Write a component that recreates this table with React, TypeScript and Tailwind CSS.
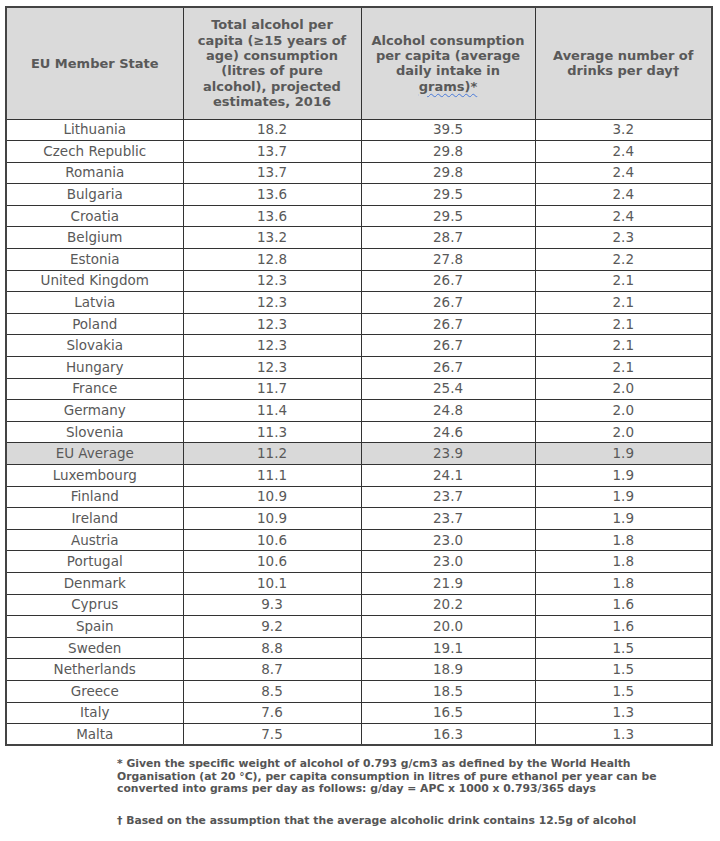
import React from 'react';

type Row = [string, string, string, string];

const rows: Row[] = [
  ['Lithuania', '18.2', '39.5', '3.2'],
  ['Czech Republic', '13.7', '29.8', '2.4'],
  ['Romania', '13.7', '29.8', '2.4'],
  ['Bulgaria', '13.6', '29.5', '2.4'],
  ['Croatia', '13.6', '29.5', '2.4'],
  ['Belgium', '13.2', '28.7', '2.3'],
  ['Estonia', '12.8', '27.8', '2.2'],
  ['United Kingdom', '12.3', '26.7', '2.1'],
  ['Latvia', '12.3', '26.7', '2.1'],
  ['Poland', '12.3', '26.7', '2.1'],
  ['Slovakia', '12.3', '26.7', '2.1'],
  ['Hungary', '12.3', '26.7', '2.1'],
  ['France', '11.7', '25.4', '2.0'],
  ['Germany', '11.4', '24.8', '2.0'],
  ['Slovenia', '11.3', '24.6', '2.0'],
  ['EU Average', '11.2', '23.9', '1.9'],
  ['Luxembourg', '11.1', '24.1', '1.9'],
  ['Finland', '10.9', '23.7', '1.9'],
  ['Ireland', '10.9', '23.7', '1.9'],
  ['Austria', '10.6', '23.0', '1.8'],
  ['Portugal', '10.6', '23.0', '1.8'],
  ['Denmark', '10.1', '21.9', '1.8'],
  ['Cyprus', '9.3', '20.2', '1.6'],
  ['Spain', '9.2', '20.0', '1.6'],
  ['Sweden', '8.8', '19.1', '1.5'],
  ['Netherlands', '8.7', '18.9', '1.5'],
  ['Greece', '8.5', '18.5', '1.5'],
  ['Italy', '7.6', '16.5', '1.3'],
  ['Malta', '7.5', '16.3', '1.3'],
];

const th = 'border border-[#333] bg-[#dadada] px-1 text-center align-middle font-bold text-[13px] leading-[15.3px]';
const td = 'border border-[#333] h-[21.6px] p-0 text-center align-middle text-[13.5px] leading-[15px]';

export default function App() {
  return (
    <div className="min-h-[841px] w-[720px] bg-white pl-[5px] pt-[6px] text-[#595959] [font-family:'DejaVu_Sans',sans-serif]">
      <table className="w-[706px] table-fixed border-collapse border-2 border-[#444]">
        <colgroup>
          <col className="w-[177px]" />
          <col className="w-[178px]" />
          <col className="w-[174px]" />
          <col className="w-[177px]" />
        </colgroup>
        <thead>
          <tr className="h-[112px]">
            <th className={th}>EU Member State</th>
            <th className={th}>
              Total alcohol per
              <br />
              capita (≥15 years of
              <br />
              age) consumption
              <br />
              (litres of pure
              <br />
              alcohol), projected
              <br />
              estimates, 2016
            </th>
            <th className={th}>
              Alcohol consumption
              <br />
              per capita (average
              <br />
              daily intake in
              <br />
              <span className="underline decoration-wavy decoration-[#4a7ad8] decoration-1 underline-offset-2">grams)*</span>
            </th>
            <th className={th}>
              Average number of
              <br />
              drinks per day†
            </th>
          </tr>
        </thead>
        <tbody>
          {rows.map(([state, total, grams, drinks]) => {
            const avg = state === 'EU Average';
            return (
              <tr key={state} className={avg ? 'bg-[#d9d9d9]' : ''}>
                <td className={td}>{state}</td>
                <td className={td}>{total}</td>
                <td className={td}>{grams}</td>
                <td className={td}>{drinks}</td>
              </tr>
            );
          })}
        </tbody>
      </table>

      {/* footnotes */}
      <div className="mt-[12px] pl-[112px] text-[10.8px] font-bold leading-[12.5px] text-[#555]">
        <p>
          * Given the specific weight of alcohol of 0.793 g/cm3 as defined by the World Health
          <br />
          Organisation (at 20 °C), per capita consumption in litres of pure ethanol per year can be
          <br />
          converted into grams per day as follows: g/day = APC x 1000 x 0.793/365 days
        </p>
        <p className="mt-[19px]">† Based on the assumption that the average alcoholic drink contains 12.5g of alcohol</p>
      </div>
    </div>
  );
}
